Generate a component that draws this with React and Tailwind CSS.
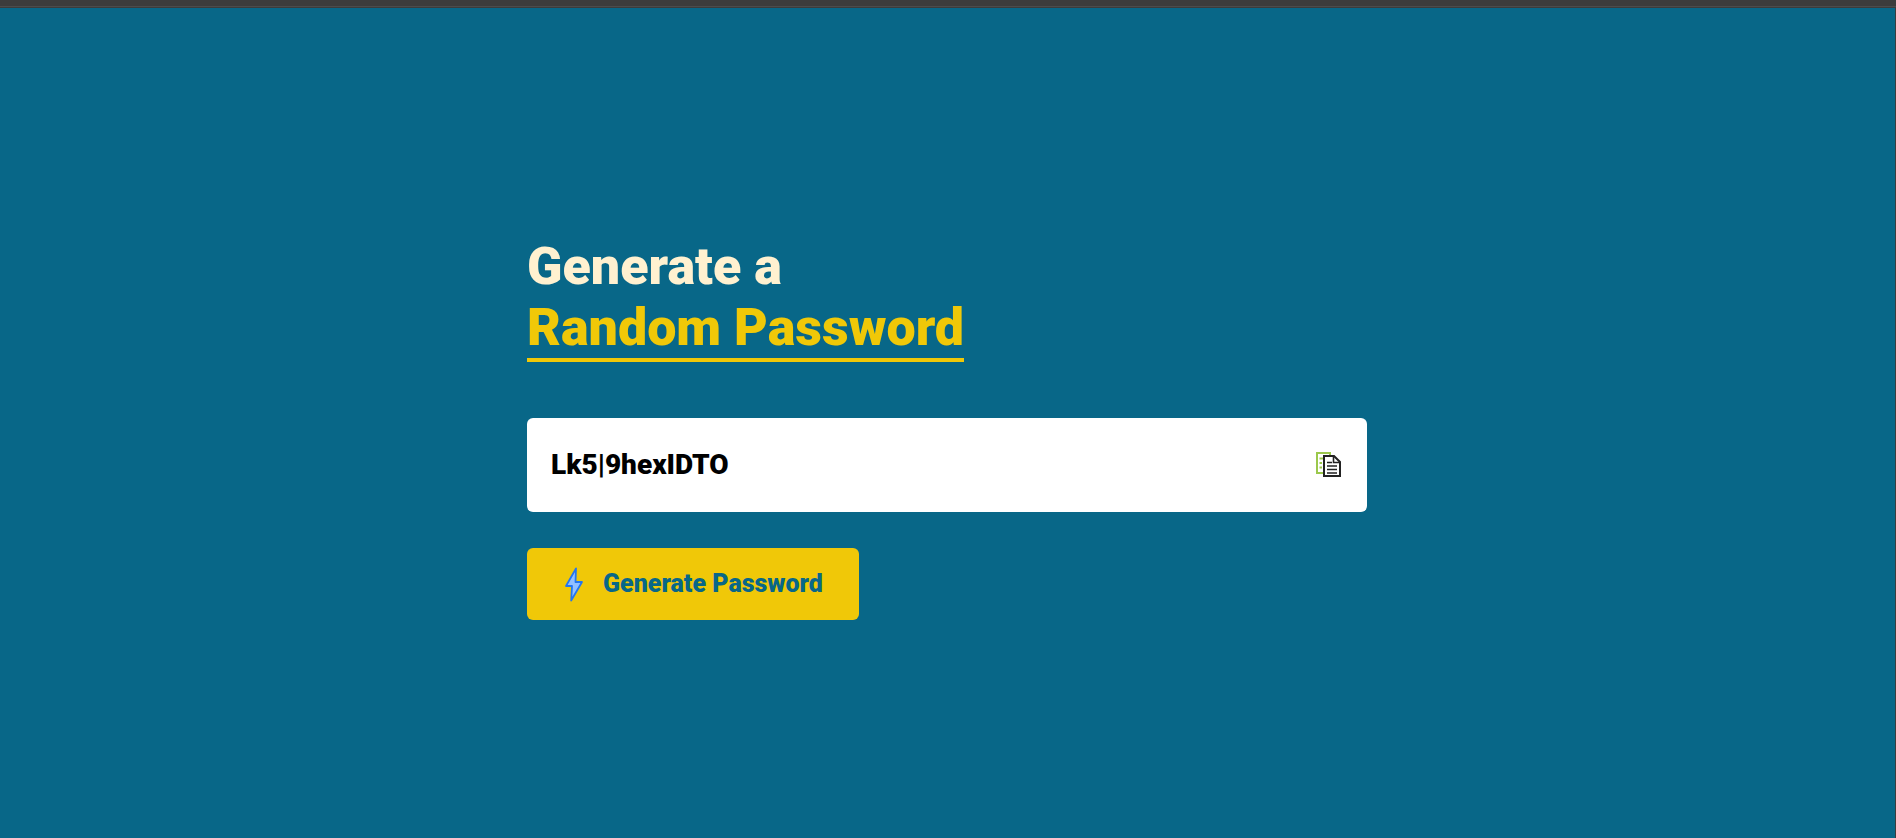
import { useState } from "react";

const CHARS =
  "ABCDEFGHIJKLMNOPQRSTUVWXYZabcdefghijklmnopqrstuvwxyz0123456789@#$%^&*()_+~|}{[]<>/-=";

function CopyIcon() {
  return (
    <svg viewBox="0 0 28 28" className="size-7" aria-hidden="true">
      <g fill="none" stroke="#9bc84c" strokeWidth="2">
        <path d="M8 22H2V2h13v3" />
        <path d="M4.500 7.500h3.500M4.500 12h2.500M4.500 16.500h2.500" strokeWidth="1.800" />
      </g>
      <path d="M9 5h10l6 6v14H9z" fill="#fff" stroke="#222" strokeWidth="2" />
      <path d="M18.500 5v6.500H25M12 11.500h5M12 15h10M12 18.500h10M12 22h10" fill="none" stroke="#222" strokeWidth="1.600" />
    </svg>
  );
}

function BoltIcon() {
  return (
    <svg viewBox="0 0 36 36" className="size-9" aria-hidden="true">
      <path
        d="M21 2.500 11 20h6l-.800 14.500L27 16h-6.500z"
        fill="#92c0ff"
        stroke="#2476f0"
        strokeWidth="1.800"
        strokeLinejoin="round"
      />
    </svg>
  );
}

export default function App() {
  const [password, setPassword] = useState("Lk5|9hexIDTO");

  const generate = () =>
    setPassword(
      Array.from({ length: 12 }, () => CHARS[Math.floor(Math.random() * CHARS.length)]).join("")
    );

  return (
    <div className="flex min-h-screen flex-col bg-[#3c3c3c] font-[Roboto,'Liberation_Sans',sans-serif]">
      <div className="h-2 shrink-0 pt-1.5">
        <div className="h-px bg-[#4c4c4c]" />
      </div>
      <main className="mr-px grow bg-[#086788] pt-[228px] pr-[25px] pb-12 pl-6">
        <div className="mx-auto max-w-[840px]">
          <h1 className="text-[52px] leading-[61px] font-black text-[#fff1d0]">
            Generate a
            <br />
            <span className="inline-block border-b-4 border-[#f0c808] text-[#f0c808]">
              Random Password
            </span>
          </h1>
          <div className="mt-14 flex h-[94px] items-center rounded-md bg-white px-6">
            <input
              type="text"
              aria-label="Password"
              readOnly
              value={password}
              className="min-w-0 grow bg-transparent text-[28px] font-black text-black outline-none"
            />
            <button
              type="button"
              aria-label="Copy password"
              onClick={() => navigator.clipboard?.writeText(password)}
            >
              <CopyIcon />
            </button>
          </div>
          <button
            type="button"
            onClick={generate}
            className="mt-9 flex h-[72px] items-center gap-3 rounded-md bg-[#f0c808] pr-9 pl-7 text-[25px] font-black text-[#086788]"
          >
            <BoltIcon />
            Generate Password
          </button>
        </div>
      </main>
    </div>
  );
}
